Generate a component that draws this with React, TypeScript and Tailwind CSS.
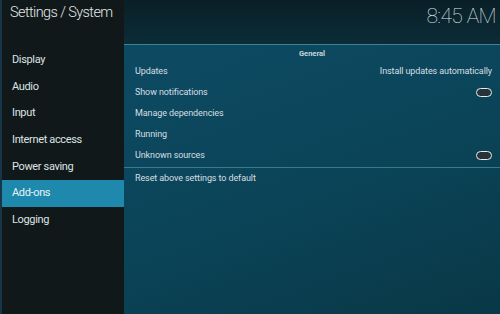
import React from "react";

const menu = ["Display", "Audio", "Input", "Internet access", "Power saving", "Add-ons", "Logging"];

type Row = { label: string; value?: string; toggle?: boolean };

const rows: Row[] = [
  { label: "Updates", value: "Install updates automatically" },
  { label: "Show notifications", toggle: true },
  { label: "Manage dependencies" },
  { label: "Running" },
  { label: "Unknown sources", toggle: true },
];

function Toggle() {
  return <span className="block h-[9px] w-[16px] rounded-full border border-[#e6ecee] bg-[#26343a]" />;
}

export default function App() {
  return (
    <div
      className="flex h-[314px] w-[500px] overflow-hidden text-[#e3e9eb]"
      style={{ fontFamily: "Roboto, 'Open Sans', sans-serif" }}
    >
      <aside className="flex w-[124px] shrink-0 flex-col border-l-2 border-[#173547] bg-[#111819]">
        <h1 className="h-[47px] whitespace-nowrap pl-[8px] pt-[3px] text-[14.5px] font-light leading-[20px] tracking-[-0.6px]">
          Settings / System
        </h1>
        <nav className="flex flex-col">
          {menu.map((m) => (
            <div
              key={m}
              className={
                "flex h-[26.67px] items-center pl-[10px] text-[11px] tracking-[-0.35px] " +
                (m === "Add-ons" ? "bg-[#1e88ad] text-[#e8f3f7]" : "text-[#dde3e5]")
              }
            >
              {m}
            </div>
          ))}
        </nav>
      </aside>

      <main className="flex flex-1 flex-col bg-[linear-gradient(160deg,#0d4c64_0%,#0b4459_55%,#093846_100%)]">
        <header className="flex h-[45px] shrink-0 items-start justify-end border-b border-[#3f8298] bg-[linear-gradient(180deg,#0a1f27_0%,#0b2c37_100%)] pr-[4px] pt-[2px]">
          <span className="text-[21px] font-thin leading-[28px] tracking-[-0.6px] text-[#dbe3e6]">8:45 AM</span>
        </header>

        <div className="flex h-[16px] items-center justify-center pt-[1px] text-[7.5px] font-bold text-[#c9d5d9]">
          General
        </div>

        <div className="flex flex-col">
          {rows.map((r) => (
            <div
              key={r.label}
              className="flex h-[21px] items-center justify-between pl-[11px] pr-[8px] text-[9px] tracking-[-0.1px] text-[#d6dfe2]"
            >
              <span>{r.label}</span>
              {r.value && <span>{r.value}</span>}
              {r.toggle && <Toggle />}
            </div>
          ))}
        </div>

        <div className="mt-[1px] border-t border-[#3a7a8f]">
          <div className="flex h-[21px] items-center pl-[11px] text-[9px] tracking-[-0.1px] text-[#d6dfe2]">
            Reset above settings to default
          </div>
        </div>
      </main>
    </div>
  );
}
